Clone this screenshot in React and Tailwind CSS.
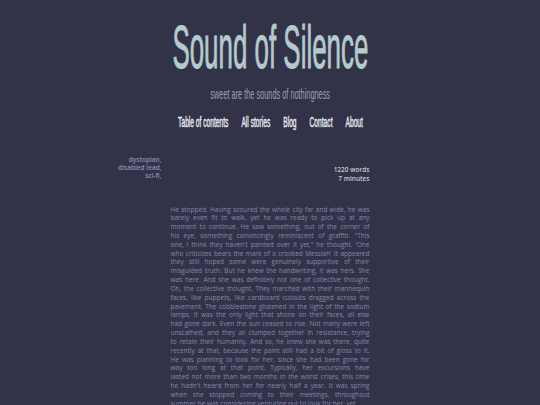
import React from "react";

const lines = [
  "He stopped. Having scoured the whole city far and wide, he was",
  "barely even fit to walk, yet he was ready to pick up at any",
  "moment to continue. He saw something, out of the corner of",
  "his eye, something convincingly reminiscent of graffiti. \"This",
  "one, I think they haven't painted over it yet,\" he thought. 'One",
  "who criticizes bears the mark of a crooked Messiah' It appeared",
  "they still hoped some were genuinely supportive of their",
  "misguided truth. But he knew the handwriting, it was hers. She",
  "was here. And she was definitely not one of collective thought.",
  "Oh, the collective thought. They marched with their mannequin",
  "faces, like puppets, like cardboard cutouts dragged across the",
  "pavement. The cobblestone glistened in the light of the sodium",
  "lamps. It was the only light that shone on their faces, all else",
  "had gone dark. Even the sun ceased to rise. Not many were left",
  "unscathed, and they all clumped together in resistance, trying",
  "to retain their humanity. And so, he knew she was there, quite",
  "recently at that, because the paint still had a bit of gloss to it.",
  "He was planning to look for her, since she had been gone for",
  "way too long at that point. Typically, her excursions have",
  "lasted not more than two months in the worst crises, this time",
  "he hadn't heard from her for nearly half a year. It was spring",
  "when she stopped coming to their meetings, throughout",
  "summer he was considering venturing out to look for her, yet",
];

export default function App() {
  return (
    <div className="min-h-[405px] h-[405px] overflow-hidden bg-[#323348] font-['Open_Sans',sans-serif]">
      <div className="pt-[16px] flex justify-center">
        <div className="h-[62px] text-[62px] leading-[62px] whitespace-nowrap text-[#b3cbcc] [-webkit-text-stroke:1px_#b3cbcc] font-['Liberation_Sans',sans-serif] scale-x-[0.418] origin-center">
          Sound of Silence
        </div>
      </div>
      <div className="mt-[8px] flex justify-center">
        <div className="h-[15px] text-[15px] leading-[15px] whitespace-nowrap text-[#9a9eb0] font-['Liberation_Sans',sans-serif] scale-x-[0.49] origin-center">
          sweet are the sounds of nothingness
        </div>
      </div>
      <div className="mt-[14px] flex justify-center">
        <nav className="h-[14px] flex gap-[27.4px] text-[14px] leading-[14px] whitespace-nowrap text-[#ececf2] [-webkit-text-stroke:0.4px_#ececf2] font-['Liberation_Sans',sans-serif] scale-x-[0.475] origin-center">
          <a>Table of contents</a>
          <a>All stories</a>
          <a>Blog</a>
          <a>Contact</a>
          <a>About</a>
        </nav>
      </div>
      <div className="mt-[27px] grid grid-cols-[1fr_199px_1fr] gap-x-[9px]">
        <div className="text-right text-[6.5px] leading-[8px] font-semibold text-[#8a90b3]">
          <div>dystopian,</div>
          <div>disabled lead,</div>
          <div>sci-fi,</div>
        </div>
        <div>
          <div className="mt-[8.5px] text-right text-[6.5px] leading-[9px] font-semibold text-[#c8c8d2]">
            <div>1220 words</div>
            <div>7 minutes</div>
          </div>
          <div className="mt-[23px] text-[6.5px] leading-[8.83px] text-[#8188ad]">
            {lines.map((l, i) => (
              <div
                key={i}
                className={
                  i === lines.length - 1
                    ? "text-justify whitespace-nowrap"
                    : "text-justify [text-align-last:justify] whitespace-nowrap"
                }
              >
                {l}
              </div>
            ))}
          </div>
        </div>
        <div />
      </div>
    </div>
  );
}
